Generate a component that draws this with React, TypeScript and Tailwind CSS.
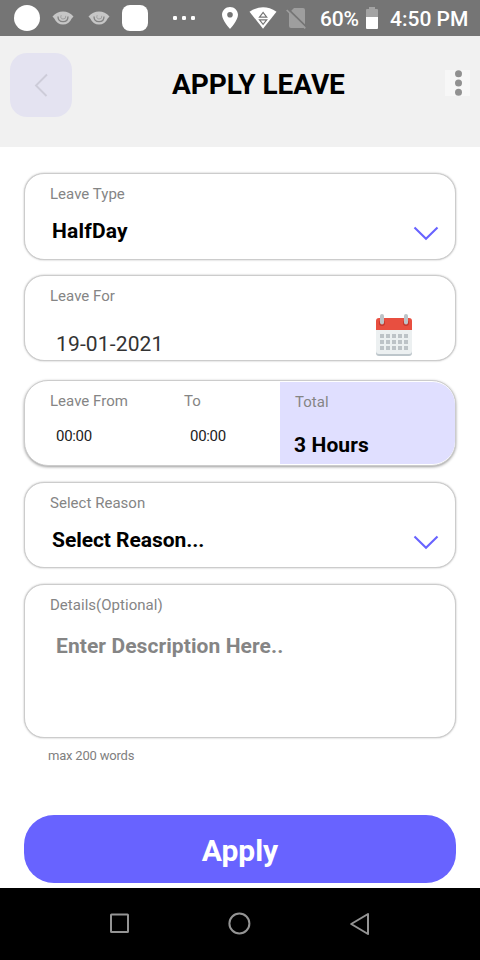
import type { ReactNode } from "react";

function StatusBar() {
  return (
    <div className="flex h-9 items-center bg-[#757575] text-white">
      <div className="ml-[14px] size-[26px] rounded-full bg-white" />
      <Eye className="ml-[12px]" />
      <Eye className="ml-[14px]" />
      <div className="ml-[12px] size-[26px] rounded-lg bg-white" />
      <svg className="ml-[24px]" width="24" height="6" viewBox="0 0 24 6" fill="#fff">
        <rect x="1" y="1" width="4" height="4" rx="1.3" />
        <rect x="10" y="1" width="4" height="4" rx="1.3" />
        <rect x="19" y="1" width="4" height="4" rx="1.3" />
      </svg>
      <svg className="ml-[26px]" width="16" height="22" viewBox="0 0 16 22" fill="#fff" fillRule="evenodd">
        <path d="M8 0C3.6 0 0 3.4 0 7.8 0 13.3 8 22 8 22s8-8.700 8-14.200C16 3.400 12.400 0 8 0Zm0 5a2.800 2.800 0 1 1 0 5.600A2.800 2.800 0 0 1 8 5Z" />
      </svg>
      <svg className="ml-[11px]" width="28" height="22" viewBox="0 0 28 22">
        <path d="M0.500 4.700Q14-4 27.500 4.700L14 21.700Z" fill="#fff" />
        <path d="M10.500 10.200h7.200L14.100 5.400ZM10.500 12.800h7.200L14.100 17.400Z" fill="none" stroke="#757575" strokeWidth="1.200" />
      </svg>
      <svg className="ml-[9px]" width="21" height="22" viewBox="0 0 21 22">
        <path d="M8 1h9q2 0 2 2v16q0 2-2 2H5q-2 0-2-2V6Z" fill="#9e9e9e" />
        <path d="M2.500 2.500L21 20.500" stroke="#757575" strokeWidth="1.800" />
        <path d="M0.700 3L19.300 21.300" stroke="#9e9e9e" strokeWidth="1.700" />
      </svg>
      <span className="ml-[13px] mt-px w-[39px] whitespace-nowrap text-[21px] font-medium leading-9 tracking-[-0.2px]">60%</span>
      <svg className="-mt-px ml-[7px]" width="12" height="22" viewBox="0 0 12 22">
        <path d="M3 0h6v2h2q1 0 1 1v7H0V3q0-1 1-1h2Z" fill="#a3a3a3" />
        <path d="M0 10h12v11q0 1-1 1H1q-1 0-1-1Z" fill="#fff" />
      </svg>
      <span className="ml-[12px] mt-px whitespace-nowrap text-[21px] font-medium leading-9">4:50 PM</span>
    </div>
  );
}

function Eye({ className }: { className: string }) {
  return (
    <svg className={className} width="22" height="14" viewBox="0 0 22 14">
      <path d="M0.500 5.500Q5 0.500 11 0.500T21.500 5.500L19.700 7.500Q17 13.500 11 13.500T2.300 7.500Z" fill="#c6c6c6" />
      <path d="M6 5.500Q6 10.700 11 10.700T16 5.500" fill="none" stroke="#828282" strokeWidth="1.300" />
      <path d="M9.200 4.200Q7.800 7.800 11 8T13.800 4.800" fill="none" stroke="#a0a0a0" strokeWidth="1" />
    </svg>
  );
}

function Header() {
  return (
    <header className="flex h-[111px] items-start bg-[#f1f1f1]">
      <button className="ml-[10px] mt-[17px] flex h-16 w-[62px] items-center justify-center rounded-[17px] bg-[#e4e3f1]">
        <svg width="16" height="24" viewBox="0 0 16 24" fill="none" stroke="#cdccd9" strokeWidth="1.900">
          <path d="M14 1.500L3 12.500L13.500 23" />
        </svg>
      </button>
      <h1 className="ml-[100px] mt-[33px] w-[174px] whitespace-nowrap text-[28px] font-bold leading-8 tracking-[-0.050px] text-black">
        APPLY LEAVE
      </h1>
      <button className="ml-[99px] mt-[34px] flex h-[26px] w-[25px] justify-center bg-[#f7f7f7]">
        <svg width="8" height="26" viewBox="0 0 8 26" fill="#919191">
          <circle cx="4.500" cy="3.800" r="3.500" />
          <circle cx="4.500" cy="13" r="3.500" />
          <circle cx="4.500" cy="22.200" r="3.500" />
        </svg>
      </button>
    </header>
  );
}

function Label({ children }: { children: ReactNode }) {
  return <div className="whitespace-nowrap text-[15px] leading-5 tracking-[0.030px] text-[#858585]">{children}</div>;
}

function Chevron() {
  return (
    <svg width="26" height="15" viewBox="0 0 26 15" fill="none" stroke="#6863ff" strokeWidth="2.100">
      <path d="M1.500 1.500L13 12.800L24.500 1.500" />
    </svg>
  );
}

function SelectCard({ label, value, className, valueClass }: { label: string; value: string; className: string; valueClass: string }) {
  return (
    <section className={`rounded-[20px] border border-[#cccccc] bg-white pl-[25px] pr-4 pt-[10px] shadow-[0_0_2px_rgba(0,0,0,0.3)] ${className}`}>
      <Label>{label}</Label>
      <div className="mt-[15px] flex justify-between pl-[2px]">
        <span className={`whitespace-nowrap text-[21px] font-bold leading-6 text-black ${valueClass}`}>{value}</span>
        <div className="mt-[7px]">
          <Chevron />
        </div>
      </div>
    </section>
  );
}

function CalendarIcon() {
  const columns = [4, 10, 16, 22, 28];
  const rows = [20, 26, 32];
  return (
    <svg width="36" height="42" viewBox="0 0 36 42">
      <path d="M0 14h36v25q0 3-3 3H3q-3 0-3-3Z" fill="#bdc6cb" />
      <path d="M0 14h36v23q0 3-3 3H3q-3 0-3-3Z" fill="#ecf0f1" />
      <path d="M3 4h30q3 0 3 3v9H0V7q0-3 3-3Z" fill="#e84f40" />
      <circle cx="6" cy="9" r="3" fill="#c4382d" />
      <circle cx="30" cy="9" r="3" fill="#c4382d" />
      <rect x="4" y="0" width="4" height="10.500" rx="2" fill="#bdc3c7" />
      <rect x="28" y="0" width="4" height="10.500" rx="2" fill="#bdc3c7" />
      {rows.map((y) => columns.map((x) => <rect key={`${x}-${y}`} x={x} y={y} width="4" height="4" fill="#bdc3c7" />))}
    </svg>
  );
}

function TimeField({ label, className }: { label: string; className: string }) {
  return (
    <div className={`pt-[10px] ${className}`}>
      <Label>{label}</Label>
      <div className="ml-[6px] mt-[15px] text-[15px] leading-5 tracking-[-0.300px] text-[#222222]">00:00</div>
    </div>
  );
}

function NavBar() {
  return (
    <nav className="flex h-[72px] items-center bg-black">
      <svg className="-mt-px ml-[109px]" width="21" height="21" viewBox="0 0 21 21" fill="none" stroke="#949494" strokeWidth="2">
        <rect x="2" y="1.500" width="17" height="17.500" rx="0.500" />
      </svg>
      <svg className="-mt-px ml-[98px]" width="23" height="23" viewBox="0 0 23 23" fill="none" stroke="#949494" strokeWidth="2">
        <circle cx="11.400" cy="11.500" r="10" />
      </svg>
      <svg className="ml-[98px]" width="21" height="24" viewBox="0 0 21 24" fill="none" stroke="#949494" strokeWidth="2" strokeLinejoin="round">
        <path d="M19 2L2.200 12L19 22Z" />
      </svg>
    </nav>
  );
}

export default function App() {
  return (
    <div className="flex h-[960px] w-[480px] flex-col overflow-hidden bg-white font-['Roboto',sans-serif]">
      <StatusBar />
      <Header />
      <main className="flex h-[741px] flex-col px-6 pt-[26px]">
        <SelectCard label="Leave Type" value="HalfDay" className="h-[87px]" valueClass="tracking-[0.200px]" />

        <section className="mt-[15px] flex h-[86px] justify-between rounded-[20px] border border-[#cccccc] bg-white pl-[25px] pr-[43px] pt-[10px] shadow-[0_0_2px_rgba(0,0,0,0.3)]">
          <div>
            <Label>Leave For</Label>
            <div className="ml-[6px] mt-[26px] whitespace-nowrap text-[21px] leading-6 tracking-[0.150px] text-[#333333]">19-01-2021</div>
          </div>
          <div className="mt-7">
            <CalendarIcon />
          </div>
        </section>

        <section className="mt-[19px] flex h-[86px] overflow-hidden rounded-[24px] border border-[#cccccc] bg-white pl-[25px] shadow-[0_1px_3px_rgba(0,0,0,0.4)]">
          <TimeField label="Leave From" className="w-[134px]" />
          <TimeField label="To" className="w-24" />
          <div className="my-px flex-1 rounded-r-[22px] bg-[#e0dfff] pl-[14px] pt-[10px]">
            <div className="pl-px">
              <Label>Total</Label>
            </div>
            <div className="mt-[21px] whitespace-nowrap text-[21px] font-bold leading-6 tracking-[0.100px] text-black">3 Hours</div>
          </div>
        </section>

        <SelectCard label="Select Reason" value="Select Reason..." className="mt-4 h-[86px]" valueClass="tracking-[-0.050px]" />

        <section className="mt-4 h-[154px] rounded-[20px] border border-[#cccccc] bg-white pl-[25px] pt-[10px] shadow-[0_0_2px_rgba(0,0,0,0.3)]">
          <Label>Details(Optional)</Label>
          <div className="ml-[6px] mt-[19px] whitespace-nowrap text-[21px] font-bold leading-6 tracking-[0.080px] text-[#858585]">
            Enter Description Here..
          </div>
        </section>
        <p className="ml-6 mt-[10px] text-[13px] leading-4 tracking-[-0.200px] text-[#808080]">max 200 words</p>

        <button className="mt-[51px] h-[68px] rounded-[30px] bg-[#6863ff] pt-1 text-[30px] font-bold leading-9 text-white">
          Apply
        </button>
      </main>
      <NavBar />
    </div>
  );
}
